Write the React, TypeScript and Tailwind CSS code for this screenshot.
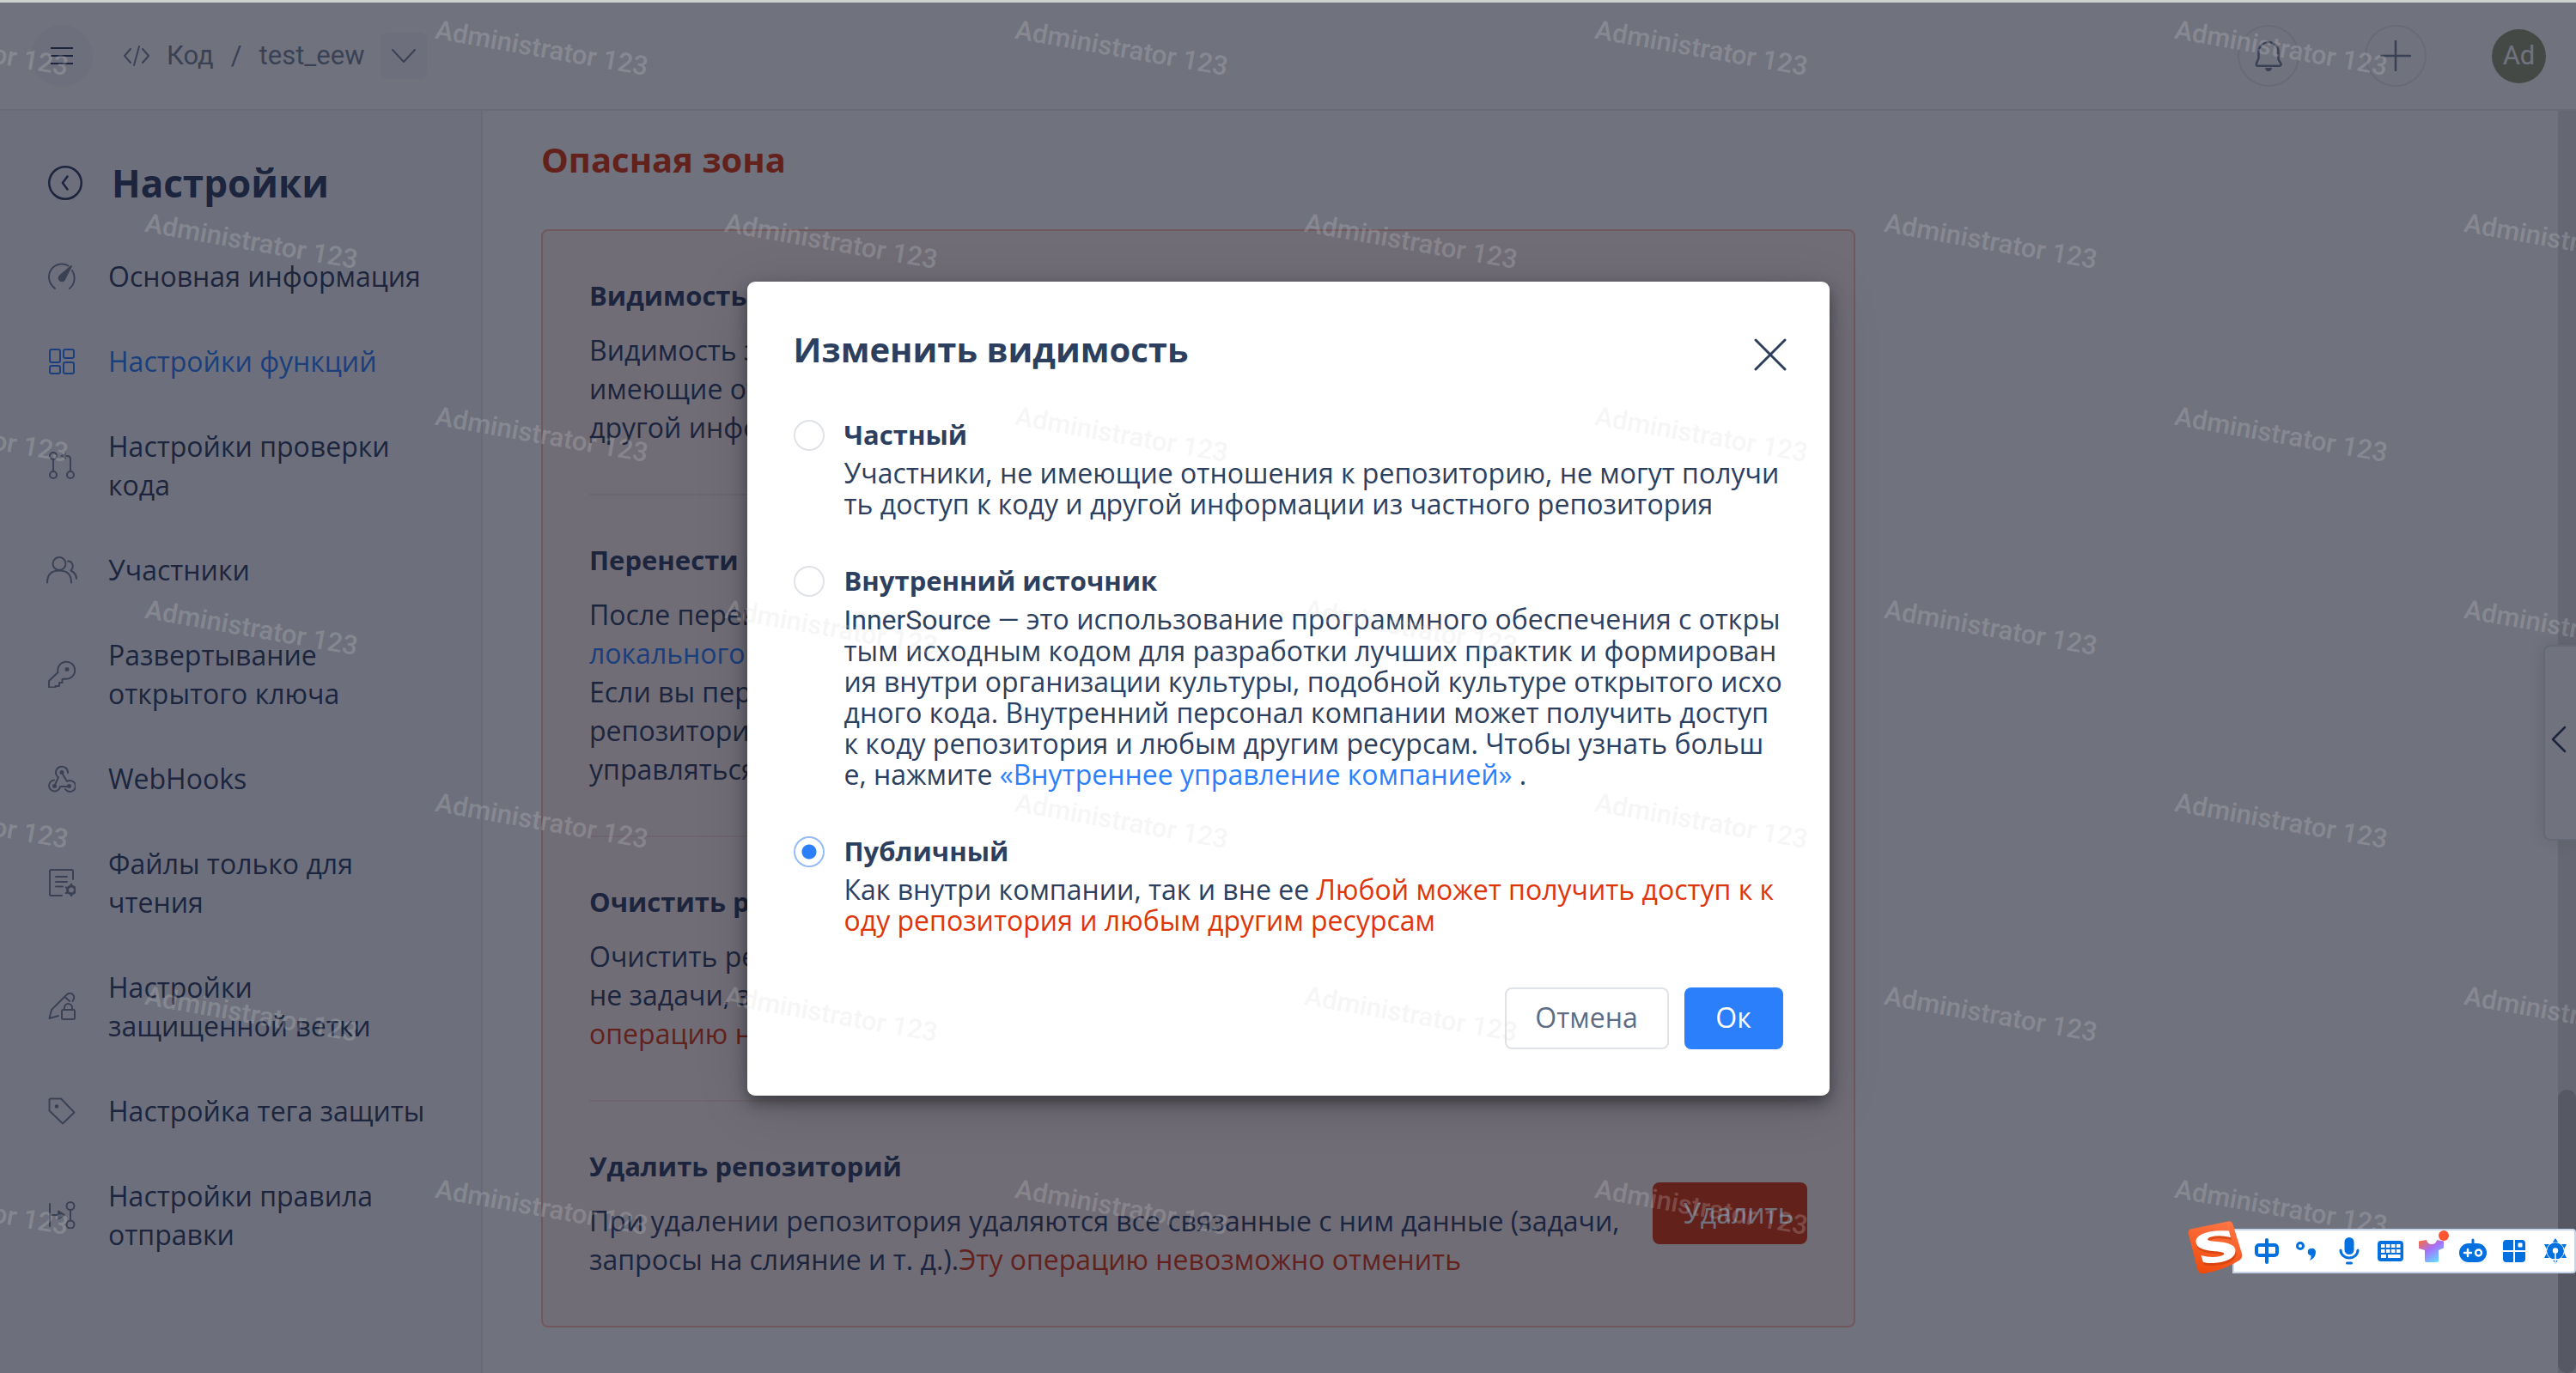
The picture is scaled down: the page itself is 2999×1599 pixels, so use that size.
import React, { useState } from "react";

const TEXT = "text-[#2d3f5e]";

function Svg({ children, className = "size-8" }: { children: React.ReactNode; className?: string }) {
  return (
    <svg
      viewBox="0 0 32 32"
      className={`${className} shrink-0`}
      fill="none"
      stroke="currentColor"
      strokeWidth="2"
      strokeLinecap="round"
      strokeLinejoin="round"
      aria-hidden="true"
    >
      {children}
    </svg>
  );
}

const GaugeIcon = (
  <Svg>
    <path d="M8 30C3 26 .8 21 1 15.500C1.500 7.500 8 1.500 16 1.500c3 0 5.500.8 7.500 2M28 9c2 3 3 7 2.500 11-.5 4-2.500 7.500-5.500 10" />
    <path d="M27 4 19.500 18.500a3.500 3.500 0 1 1-5.500-3.500z" fill="currentColor" />
  </Svg>
);
const GridIcon = (
  <Svg>
    <rect x="2" y="2" width="12" height="15" rx="2" />
    <rect x="18" y="2" width="12" height="10" rx="2" />
    <rect x="2" y="21" width="12" height="9" rx="2" />
    <rect x="18" y="17" width="12" height="13" rx="2" />
  </Svg>
);
const PullIcon = (
  <Svg>
    <circle cx="6" cy="5" r="4" />
    <circle cx="6" cy="27" r="4" />
    <circle cx="26" cy="27" r="4" />
    <path d="M6 9v14M26 23V9q0-4-4-4h-3" />
    <path d="M21 1v8l-7-4z" fill="currentColor" stroke="none" />
  </Svg>
);
const UsersIcon = (
  <Svg className="w-9 h-8">
    <circle cx="13" cy="8.500" r="7.500" />
    <path d="M-1 30.500c0-9 5-14 14-14s14 5 14 14M23 5.500c5 0 8 6 3.500 11 4 2 6.500 5 6.500 9.500" />
  </Svg>
);
const KeyIcon = (
  <Svg>
    <path d="M11.500 14a10 10 0 1 1 8 7.500L16.500 22v4H13v4H8.500v1.500H1V24z" />
    <circle cx="22" cy="10.500" r="1.500" fill="currentColor" />
  </Svg>
);
const HookIcon = (
  <Svg>
    <path d="M10.500 13a7 7 0 1 1 12.500-4" />
    <path d="M16 9l6 10a6.500 6.500 0 1 1-2 9" />
    <path d="M12 14 7.500 24M7 17.500A6.500 6.500 0 1 0 14 25h9" />
    <circle cx="16" cy="8.500" r="1.500" fill="currentColor" />
    <circle cx="7.500" cy="24.500" r="1.500" fill="currentColor" />
    <circle cx="24.500" cy="24.500" r="1.500" fill="currentColor" />
  </Svg>
);
const FileGearIcon = (
  <Svg>
    <path d="M29 12V2.500Q29 1 27.500 1H3.500Q2 1 2 2.500v27Q2 31 3.500 31H16M9 9h13M9 15h13M9 20.500h8" />
    <circle cx="27" cy="24.500" r="4.500" strokeWidth="3" />
    <path d="M27 18v2M27 29v2M21 21.500l2 1M31 26.500l2 1M21 28l2-1M31 22.500l2-1" strokeWidth="2.500" />
  </Svg>
);
const PenLockIcon = (
  <Svg>
    <path d="M12 27 1.500 30 4 20 21 3q4-4 7.500-1t0 8M19.500 5l5.500 5" />
    <rect x="16" y="20" width="15" height="11" rx="1.500" />
    <path d="M19 20v-2.500a4.500 4.500 0 0 1 9 0V20" />
  </Svg>
);
const TagIcon = (
  <Svg>
    <path d="M1.500 2.500v13L17 30.500 30.500 17.500 15 1.500H2.500z" />
    <circle cx="10" cy="10.500" r="1.300" fill="currentColor" />
  </Svg>
);
const PushIcon = (
  <Svg>
    <path d="M2 3v26M4 16h8M26 10v12" />
    <path d="M12 11.500v9l7-4.500z" fill="currentColor" />
    <circle cx="26" cy="5.500" r="4.500" />
    <circle cx="26" cy="27" r="4.500" />
  </Svg>
);

const NAV: { label: string; icon: React.ReactNode; active?: boolean }[] = [
  { label: "Основная информация", icon: GaugeIcon },
  { label: "Настройки функций", icon: GridIcon, active: true },
  { label: "Настройки проверки кода", icon: PullIcon },
  { label: "Участники", icon: UsersIcon },
  { label: "Развертывание открытого ключа", icon: KeyIcon },
  { label: "WebHooks", icon: HookIcon },
  { label: "Файлы только для чтения", icon: FileGearIcon },
  { label: "Настройки защищенной ветки", icon: PenLockIcon },
  { label: "Настройка тега защиты", icon: TagIcon },
  { label: "Настройки правила отправки", icon: PushIcon },
];

function Header() {
  return (
    <header className="flex h-[126px] shrink-0 items-center border-b-2 border-[#ebecf0] bg-white pl-9 pr-[35px] font-[Roboto,sans-serif] text-[31px] text-[#7a8699]">
      <button aria-label="Меню" className="flex size-[72px] items-center justify-center rounded-full bg-[#f7f8f9] text-[#2d3f5e]">
        <svg viewBox="0 0 26 20" className="h-5 w-[26px]" stroke="currentColor" strokeWidth="2" aria-hidden="true">
          <path d="M0 1h26M0 10h26M0 19h26" />
        </svg>
      </button>
      <nav aria-label="Путь" className="flex items-center">
        <a href="#code" className="ml-9 flex items-center gap-5">
          <svg viewBox="0 0 30 24" className="h-6 w-[30px]" fill="none" stroke="currentColor" strokeWidth="2" strokeLinecap="round" strokeLinejoin="round" aria-hidden="true">
            <path d="M8 4 1 12l7 8M22 4l7 8-7 8M18 1l-6 22" />
          </svg>
          Код
        </a>
        <span className="mx-5">/</span>
        <a href="#repo">test_eew</a>
      </nav>
      <button aria-label="Выбрать репозиторий" className="ml-[18px] flex size-[54px] items-center justify-center rounded-lg bg-[#f7f8f9]">
        <svg viewBox="0 0 28 16" className="h-4 w-7" fill="none" stroke="currentColor" strokeWidth="2" strokeLinecap="round" strokeLinejoin="round" aria-hidden="true">
          <path d="m1 1 13 14L27 1" />
        </svg>
      </button>
      <div className="ml-auto flex items-center gap-[76px]">
        <button aria-label="Уведомления" className="flex size-[72px] items-center justify-center rounded-full border-2 border-[#ebecf0]">
          <svg viewBox="0 0 32 36" className="h-9 w-8" fill="none" stroke="#7a8699" strokeWidth="2.500" strokeLinejoin="round" aria-hidden="true">
            <path d="M4.500 13.500a11.500 11.500 0 0 1 23 0V21q0 2 2 4.500T30 29q-.5.800-2 .800H4Q2.500 29.800 2 29t.5-3.500 2-4.500z" />
            <path d="M12 32h8q-.5 4-4 4t-4-4z" fill="#7a8699" stroke="none" />
          </svg>
        </button>
        <button aria-label="Создать" className="flex size-[72px] items-center justify-center rounded-full border-2 border-[#ebecf0]">
          <svg viewBox="0 0 36 36" className="size-9" stroke="#7a8699" strokeWidth="2.500" strokeLinecap="round" aria-hidden="true">
            <path d="M18 1v34M1 18h34" />
          </svg>
        </button>
        <button aria-label="Профиль Administrator" className="flex size-[63px] items-center justify-center rounded-full bg-[#939873] text-white">
          Ad
        </button>
      </div>
    </header>
  );
}

function Sidebar() {
  return (
    <aside className="w-[562px] shrink-0 border-r-2 border-[#ebecf0] bg-[#f8f9fa] pl-14 pr-14">
      <div className="flex items-center gap-[34px] pt-[54px]">
        <button aria-label="Назад" className="size-10">
          <Svg className="size-10">
            <circle cx="16" cy="16" r="15" />
            <path d="m18 10-4.500 6 4.500 6" />
          </Svg>
        </button>
        <h1 className="text-[44px] leading-[60px] font-bold">Настройки</h1>
      </div>
      <ul className="mt-14 flex flex-col gap-[54px] text-[32px] leading-[45px]">
        {NAV.map((item) => (
          <li key={item.label}>
            <a href="#settings" className={`flex items-center gap-[38px] ${item.active ? "text-[#2b7ffb]" : ""}`}>
              <span className={`flex w-8 justify-center ${item.active ? "" : "text-[#7a8699]"}`}>{item.icon}</span>
              <span className="flex-1">{item.label}</span>
            </a>
          </li>
        ))}
      </ul>
    </aside>
  );
}

function Section({ title, children, action }: { title: string; children: React.ReactNode; action?: React.ReactNode }) {
  return (
    <section className="flex items-center border-b-2 border-[#fbe0d9] pt-[53px] pb-[55px] last:border-b-0">
      <div className="min-w-0 flex-1">
        <h3 className="text-[31px] leading-[45px] font-bold">{title}</h3>
        <p className="mt-[18px] text-[32px] leading-[45px] whitespace-nowrap">{children}</p>
      </div>
      {action}
    </section>
  );
}

function DangerZone() {
  return (
    <main className="min-w-0 flex-1 bg-white pt-[30px] pl-[68px]">
      <h2 className="text-[40px] leading-[54px] font-bold text-[#de350b]">Опасная зона</h2>
      <div className="mt-[54px] max-w-[1530px] rounded-lg border-2 border-[#ffbdad] bg-[#fff2ee] px-[54px]">
        <Section title="Видимость репозитория">
          Видимость задает, кто может просматривать репозиторий. Люди, не
          <br />
          имеющие отношения к репозиторию, не получат доступ к коду и
          <br />
          другой информации
        </Section>
        <Section title="Перенести репозиторий">
          После переноса репозитория нужно обновить адрес
          <br />
          <a href="#remote" className="text-[#2b7ffb]">локального репозитория.</a>
          <br />
          Если вы перенесете репозиторий в другой проект,
          <br />
          репозиторий и его участники будут
          <br />
          управляться этим проектом
        </Section>
        <Section title="Очистить репозиторий">
          Очистить репозиторий: удаляется весь код, но
          <br />
          не задачи, запросы на слияние и т. д. <span className="text-[#de350b]">Эту</span>
          <br />
          <span className="text-[#de350b]">операцию невозможно отменить</span>
        </Section>
        <Section
          title="Удалить репозиторий"
          action={
            <button className="h-[72px] w-[180px] shrink-0 rounded-lg bg-[#de350b] pl-9 text-left text-[32px] text-white">
              Удалить
            </button>
          }
        >
          При удалении репозитория удаляются все связанные с ним данные (задачи,
          <br />
          запросы на слияние и т. д.).<span className="text-[#de350b]">Эту операцию невозможно отменить</span>
        </Section>
      </div>
    </main>
  );
}

function Option(props: { id: string; title: string; checked: boolean; onSelect: () => void; children: React.ReactNode }) {
  const { id, title, checked, onSelect, children } = props;
  return (
    <div className="flex items-start gap-[23px]">
      <input
        type="radio"
        id={id}
        name="visibility"
        checked={checked}
        onChange={onSelect}
        className="mt-[5px] size-9 shrink-0 appearance-none rounded-full border-2 border-[#dfe2e7] bg-white checked:border-[#95bcf8] checked:bg-[radial-gradient(circle,#2b7ffb_8px,white_9px)]"
      />
      <div>
        <label htmlFor={id} className="block text-[31px] leading-[45px] font-bold">{title}</label>
        <p className="mt-1 text-[32px] leading-9 whitespace-nowrap">{children}</p>
      </div>
    </div>
  );
}

function VisibilityDialog() {
  const [value, setValue] = useState("public");
  return (
    <form
      role="dialog"
      aria-labelledby="dialog-title"
      className="w-[1260px] max-w-full rounded-[9px] bg-white px-[54px] pt-[52px] pb-[54px] shadow-[0_8px_18px_rgba(0,0,0,0.4),0_12px_60px_rgba(0,0,0,0.15)]"
    >
      <div className="flex items-start justify-between">
        <h2 id="dialog-title" className="text-[40px] leading-[54px] font-bold">Изменить видимость</h2>
        <button type="button" aria-label="Закрыть" className="mt-[14px] mr-[-4px]">
          <svg viewBox="0 0 38 38" className="size-[38px]" stroke="#2d3f5e" strokeWidth="3" strokeLinecap="round" aria-hidden="true">
            <path d="m2 2 34 34M36 2 2 36" />
          </svg>
        </button>
      </div>
      <div className="mt-[50px] flex flex-col gap-[49px]">
        <Option id="private" title="Частный" checked={value === "private"} onSelect={() => setValue("private")}>
          Участники, не имеющие отношения к репозиторию, не могут получи
          <br />
          ть доступ к коду и другой информации из частного репозитория
        </Option>
        <Option id="inner" title="Внутренний источник" checked={value === "inner"} onSelect={() => setValue("inner")}>
          <span className="font-[Roboto,sans-serif]">InnerSource —</span> это использование программного обеспечения с откры
          <br />
          тым исходным кодом для разработки лучших практик и формирован
          <br />
          ия внутри организации культуры, подобной культуре открытого исхо
          <br />
          дного кода. Внутренний персонал компании может получить доступ
          <br />
          к коду репозитория и любым другим ресурсам. Чтобы узнать больш
          <br />
          е, нажмите <a href="#inner" className="text-[#2b7ffb]">«Внутреннее управление компанией»</a> .
        </Option>
        <Option id="public" title="Публичный" checked={value === "public"} onSelect={() => setValue("public")}>
          Как внутри компании, так и вне ее <span className="text-[#de350b]">Любой может получить доступ к к</span>
          <br />
          <span className="text-[#de350b]">оду репозитория и любым другим ресурсам</span>
        </Option>
      </div>
      <div className="mt-[60px] flex justify-end gap-[18px] text-[32px] leading-[42px]">
        <button type="button" className="h-[72px] w-[191px] rounded-lg border-2 border-[#dfe2e7] pb-[2px] text-[#5e6c84]">Отмена</button>
        <button type="submit" className="h-[72px] w-[115px] rounded-lg bg-[#2b7ffb] pb-[2px] text-white">Ок</button>
      </div>
    </form>
  );
}

const WATERMARKS = [0, 1, 2, 3].flatMap((row) =>
  [-1, 0, 1, 2, 3, 4].flatMap((col) => [
    { x: 510 + col * 675, y: 19 + row * 450 },
    { x: 172 + col * 675, y: 244 + row * 450 },
  ]),
);

function Watermarks() {
  return (
    <div aria-hidden="true" className="pointer-events-none absolute inset-0 overflow-hidden font-[Roboto,sans-serif] text-[31px] leading-8 font-medium whitespace-nowrap text-[#dadada]/24">
      {WATERMARKS.map((mark) => (
        <span key={`${mark.x}-${mark.y}`} className="absolute origin-top-left rotate-[10deg]" style={{ left: mark.x, top: mark.y }}>
          Administrator 123
        </span>
      ))}
    </div>
  );
}

function ImeBar() {
  return (
    <div className="absolute right-0 bottom-[115px] flex h-[62px] items-center text-[#0270de]">
      <svg viewBox="0 0 64 62" className="z-10 h-[62px] w-16" role="img" aria-label="Sogou">
        <defs>
          <linearGradient id="logo" x1="0.600" y1="0" x2="0.300" y2="1">
            <stop offset="0" stopColor="#ff7443" />
            <stop offset="1" stopColor="#f04a0a" />
          </linearGradient>
        </defs>
        <path d="M5 9 47 0.500q4-.8 5.500 3L63 38q1.500 5-2.500 7.500Q43 57 19 61q-6 1-7.500-4L.8 15Q0 10 5 9z" fill="url(#logo)" />
        <path
          d="M48 12.500 50 20q-13-3-23-.5-5 1.500-3.500 3.500c1 1.500 9 1.500 16 2.500 9 1.500 16 4 16 10 0 9-12 14-26 14.500-6 .2-9-.5-11.500-1L15.500 41q12 3.500 22 1 5.500-1.500 4.500-3.500c-1-1.500-7-2-13-2.500C18 35 10 32 9.500 25.500 9 17 23 11 48 12.500z"
          fill="#c93a06"
          opacity=".6"
          transform="translate(1 2)"
        />
        <path
          d="M48 11.500 50 19q-13-3-23-.5-5 1.500-3.500 3.500c1 1.500 9 1.500 16 2.500 9 1.500 16 4 16 10 0 9-12 14-26 14.500-6 .2-9-.5-11.500-1L15.500 40q12 3.500 22 1 5.500-1.500 4.500-3.500c-1-1.500-7-2-13-2.500C18 34 10 31 9.500 24.500 9 16 23 10 48 11.500z"
          fill="#fff"
        />
      </svg>
      <div className="-ml-3 mt-2 flex h-[52px] items-center gap-4 rounded-r-sm border-2 border-[#c5d6ec] bg-white pr-[6px] pl-[22px]">
        <Svg className="size-8">
          <path d="M16 3v26" strokeWidth="4" />
          <rect x="4" y="9" width="24" height="12" rx="3" strokeWidth="4" />
        </Svg>
        <Svg className="size-8">
          <circle cx="7" cy="10" r="3.500" strokeWidth="3" />
          <path d="M20 13a4 4 0 0 1 5 4q0 7-7 10 2-3 1.500-6a4 4 0 0 1 .5-8z" fill="currentColor" stroke="none" />
        </Svg>
        <Svg className="size-8">
          <rect x="10.500" y="0" width="11" height="20" rx="5.500" fill="currentColor" stroke="none" />
          <path d="M6 15a10 9 0 0 0 20 0" strokeWidth="3" />
          <path d="M13.500 30h5" strokeWidth="3" />
        </Svg>
        <Svg className="size-8">
          <rect x="1" y="4" width="30" height="24" rx="4" fill="currentColor" stroke="none" />
          <path d="M5 10h4.500m1.500 0h4.500m1.500 0h4.500m1.500 0h4.500M5 16h4.500m1.500 0h4.500m1.500 0h4.500m1.500 0h4.500M5 22h6m2 0h14.500" stroke="#fff" strokeWidth="4" strokeLinecap="butt" />
        </Svg>
        <span className="relative">
          <svg viewBox="0 0 32 32" className="size-8" aria-hidden="true">
            <defs>
              <linearGradient id="shirt" x1="0" y1="0" x2="0.700" y2="1">
                <stop offset="0" stopColor="#ff6a2c" />
                <stop offset=".5" stopColor="#a472ff" />
                <stop offset="1" stopColor="#62dcff" />
              </linearGradient>
            </defs>
            <path d="M1 4.500 10 3q1 5 6 5t6-5l8 1.500v8l-6 2.500v12q0 2-2 2H10q-2 0-2-2V15l-7-2z" fill="url(#shirt)" />
          </svg>
          <span className="absolute -top-2 -right-1 size-3 rounded-full bg-[#ff5530]" />
        </span>
        <Svg className="size-8">
          <path d="M16 3v4" strokeWidth="3" />
          <rect x="0" y="7" width="32" height="22" rx="11" fill="currentColor" stroke="none" />
          <path d="M6 18h8M10 14v8" stroke="#fff" strokeWidth="2.500" />
          <circle cx="22.500" cy="18" r="3.500" stroke="#fff" strokeWidth="2.500" />
        </Svg>
        <Svg className="size-8">
          <path d="M7 3h8v12H3V7q0-4 4-4zM3 17h12v12H7q-4 0-4-4zM17 17h12v8q0 4-4 4h-8z" fill="currentColor" stroke="none" />
          <path d="M17 3h8q4 0 4 4v8H17z" fill="currentColor" stroke="none" />
          <rect x="20.500" y="6.500" width="5" height="5" rx="1" fill="#fff" stroke="none" />
        </Svg>
        <Svg className="size-8">
          <path d="m16 1 4.500 7H29l-4 8 4 8h-8.500L16 31l-4.500-7H3l4-8-4-8h8.500z" fill="currentColor" stroke="none" />
          <circle cx="16" cy="16" r="10" fill="currentColor" stroke="#fff" strokeWidth="1.200" />
          <circle cx="16" cy="16" r="9.800" fill="currentColor" stroke="none" />
          <circle cx="16" cy="15.500" r="3.200" fill="#fff" stroke="none" />
          <path d="M16 17v13M6 26h20" stroke="#fff" strokeWidth="1.500" />
        </Svg>
      </div>
    </div>
  );
}

export default function App() {
  return (
    <div className={`relative flex h-screen flex-col overflow-hidden bg-white font-['Open_Sans','Noto_Sans',sans-serif] ${TEXT}`}>
      <div className="h-[3px] shrink-0 bg-[#cdd0cf]" />
      <div className="relative flex min-h-0 flex-1 flex-col">
        <Header />
        <div className="flex min-h-0 flex-1">
          <Sidebar />
          <DangerZone />
          <div className="flex w-[21px] shrink-0 flex-col justify-end bg-[#e4e4e4]">
            <div className="h-[330px] rounded-full bg-[#bebebe]" />
          </div>
        </div>
        <button
          aria-label="Открыть панель"
          className="absolute top-[748px] right-0 flex h-[228px] w-[38px] items-center justify-center rounded-l-lg border-2 border-r-0 border-[#e4e6ea] bg-white pr-1 pb-2 shadow-[0_0_24px_rgba(0,0,0,0.12)]"
        >
          <svg viewBox="0 0 18 32" className="h-8 w-[18px]" fill="none" stroke="currentColor" strokeWidth="2.500" strokeLinecap="round" strokeLinejoin="round" aria-hidden="true">
            <path d="M16 2 2 16l14 14" />
          </svg>
        </button>
        <div className="absolute inset-0 flex items-center justify-center bg-[#111428]/60 pt-[2px]">
          <VisibilityDialog />
        </div>
      </div>
      <Watermarks />
      <ImeBar />
    </div>
  );
}
